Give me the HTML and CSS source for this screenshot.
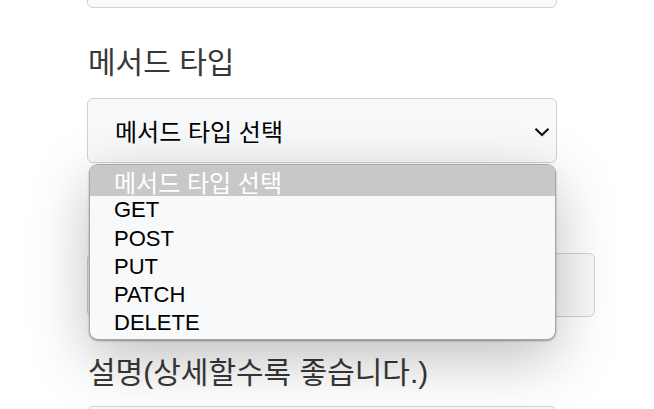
FILE: index.html
```html
<!DOCTYPE html>
<html lang="ko">
<head>
<meta charset="utf-8">
<link rel="stylesheet" href="styles.css">
</head>
<body>
<div class="page">
  <form class="form">
    <div class="field">
      <input class="input input-top" type="text">
    </div>
    <div class="field">
      <label class="label">메서드 타입</label>
      <div class="select">
        <span class="select-text">메서드 타입 선택</span>
        <svg class="chevron" width="16" height="10" viewBox="0 0 16 10"><path d="M1.5 1.8 L8 8 L14.5 1.8" fill="none" stroke="#111" stroke-width="2.2"/></svg>
      </div>
    </div>
    <div class="field">
      <label class="label label-hidden">엔드포인트</label>
      <input class="input input-wide" type="text">
    </div>
    <div class="field">
      <label class="label label-last">설명(상세할수록 좋습니다.)</label>
      <input class="input" type="text">
    </div>
  </form>
  <ul class="popup">
    <li class="option option-selected">메서드 타입 선택</li>
    <li class="option">GET</li>
    <li class="option">POST</li>
    <li class="option">PUT</li>
    <li class="option">PATCH</li>
    <li class="option">DELETE</li>
  </ul>
</div>
</body>
</html>
```
FILE: styles.css
```css
html, body {
  margin: 0;
  padding: 0;
  background: #ffffff;
  overflow: hidden;
}
.page {
  position: relative;
  width: 654px;
  height: 409px;
  overflow: hidden;
  font-family: "Noto Sans CJK KR", "Liberation Sans", sans-serif;
}
.form {
  display: flex;
  flex-direction: column;
  padding-left: 87px;
  margin-top: -56px;
}
.field {
  display: flex;
  flex-direction: column;
}
.input {
  box-sizing: border-box;
  width: 470px;
  height: 64px;
  border: 1px solid #cfd2d6;
  border-radius: 6px;
  background: #f8f9fa;
  margin: 0;
}
.input-wide {
  width: 508px;
}
.label {
  font-family: "Liberation Sans", "Noto Sans CJK KR", sans-serif;
  font-size: 30px;
  line-height: 40px;
  color: #383838;
  margin: 35px 0 15px 1px;
}
.label-hidden {
  color: #b5651d;
  font-size: 20px;
}
.label-last {
  margin: 36px 0 13px 1px;
}
.select {
  box-sizing: border-box;
  width: 470px;
  height: 65px;
  border: 1px solid #cfd2d6;
  border-radius: 6px;
  background: #f8f9fa;
  display: flex;
  align-items: center;
  justify-content: space-between;
  padding: 0 6px 0 27px;
}
.select-text {
  font-size: 24px;
  color: #000;
}
.chevron {
  display: block;
  margin-top: 2px;
}
.popup {
  position: absolute;
  left: 89px;
  top: 164px;
  width: 467px;
  height: 176px;
  box-sizing: border-box;
  margin: 0;
  padding: 0;
  list-style: none;
  background: #f8f9fa;
  border: 1px solid #a6a6a6;
  border-radius: 9px;
  overflow: hidden;
  box-shadow: 0 1px 2px rgba(0,0,0,0.35), 0 18px 60px rgba(0,0,0,0.26);
}
.option {
  font-family: "Liberation Sans", "Noto Sans CJK KR", sans-serif;
  font-size: 22px;
  line-height: 28.3px;
  color: #000;
  padding-left: 24px;
}
.option-selected {
  font-family: "Noto Sans CJK KR", sans-serif;
  background: #c8c8c8;
  color: #ffffff;
  padding-top: 3px;
  font-size: 24px;
  line-height: 28.3px;
}
```
